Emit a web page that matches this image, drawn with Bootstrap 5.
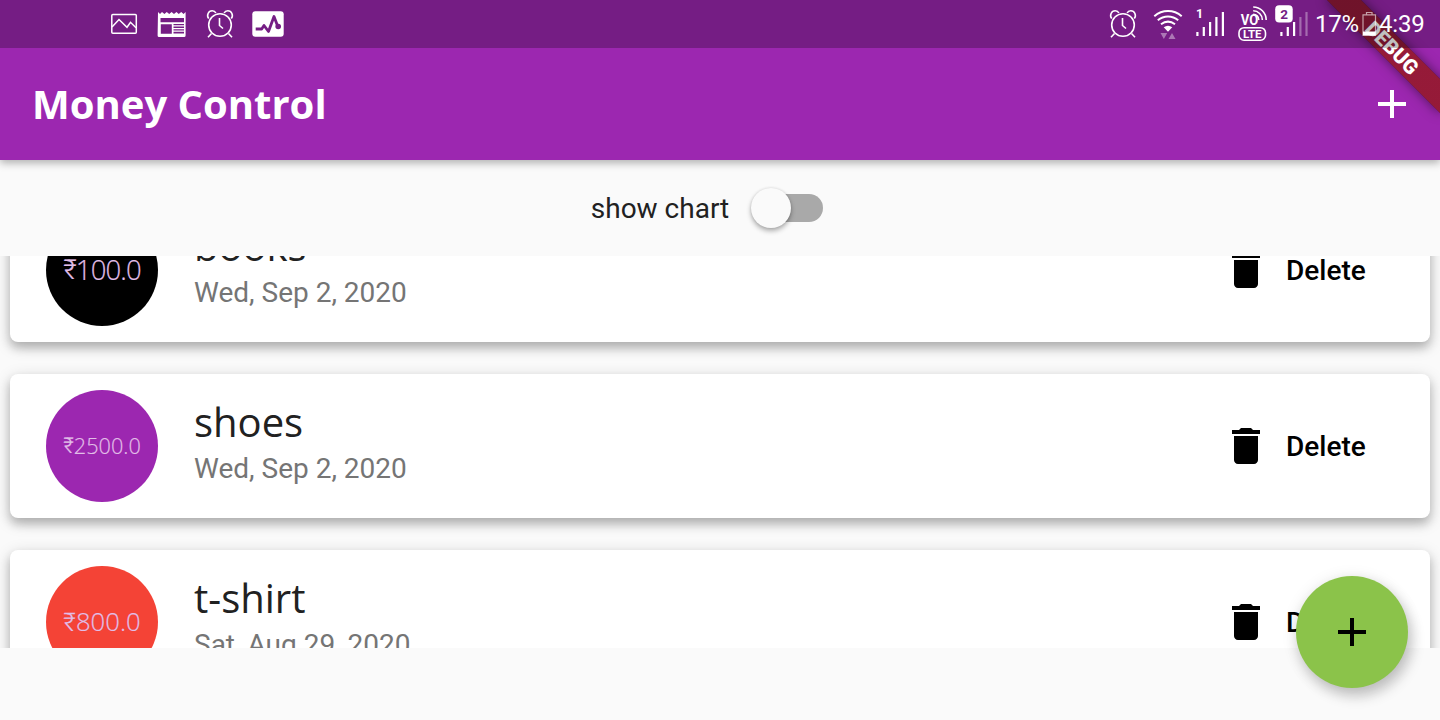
<!DOCTYPE html>
<html lang="en">
<head>
<meta charset="utf-8">
<meta name="viewport" content="width=device-width, initial-scale=1">
<title>Money Control</title>
<link href="https://cdn.jsdelivr.net/npm/bootstrap@5.3.0/dist/css/bootstrap.min.css" rel="stylesheet">
<style>
  :root { --purple: #9c27b0; --paper: #fafafa; }
  body { background: var(--paper); font-family: Roboto, sans-serif; color: #212121; }
  .screen { width: 1440px; height: 720px; }
  .status { height: 48px; background: rgba(0,0,0,.25); color: #fff; z-index: 6; font-size: 24px; line-height: 52px; padding-left: 108px; padding-right: 16px; }
  .top { height: 160px; background: var(--purple); box-shadow: 0 3px 8px rgba(0,0,0,.3); }
  .app-title { font: 700 40px/1 "Open Sans", sans-serif; color: #fff; }
  .app-row { height: 112px; padding: 0 24px 0 32px; }
  .pct { width: 47px; letter-spacing: -.3px; } .clock-time { width: 45px; letter-spacing: -.2px; }
  .ribbon { left: 1312px; top: 36px; width: 160px; height: 24px; transform: rotate(45deg); z-index: 5;
    background: linear-gradient(#b71c1ca0,#b71c1ca0), linear-gradient(#00000068,#00000068);
    box-shadow: 0 0 12px rgba(0,0,0,.5); color: #fff; font-weight: 900; font-size: 20.4px; line-height: 24px; }
  .toggle-row { height: 96px; font-size: 28px; padding-right: 26px; gap: 22px; }
  .toggle-row > span:first-child { padding-top: 2px; }
  .toggle-track { width: 68px; height: 28px; border-radius: 14px; background: #a9a9a9; margin-left: 4px; }
  .toggle-thumb { width: 40px; height: 40px; left: -4px; top: -6px; background: var(--paper); box-shadow: 0 3px 5px rgba(0,0,0,.3), 0 0 3px rgba(0,0,0,.12); }
  .tx-list { height: 392px; }
  .tx-stack { margin-top: -58px; gap: 32px; padding: 0 10px; }
  .tx { height: 144px; border: 0; border-radius: 8px; background: #fff; padding: 0 61px 0 36px; flex-shrink: 0;
    box-shadow: 0 6px 10px rgba(0,0,0,.19), 0 4px 16px rgba(0,0,0,.18); }
  .amount { width: 112px; height: 112px; font-family: "Open Sans", sans-serif; font-weight: 300; color: #e1bee7; white-space: nowrap; -webkit-text-stroke: .2px #e1bee7; }
  .amount-s { font-size: 21.7px; } .amount-m { font-size: 25.7px; } .amount-l { font-size: 27.5px; letter-spacing: -.9px; }
  .rupee { font-family: Roboto, sans-serif; }
  .tx-text { margin-left: 36px; padding-bottom: 10px; }
  .tx-name { font: 400 40px/56px "Open Sans", sans-serif; }
  .tx-date { font-size: 28px; line-height: 38px; color: #757575; }
  .del { font-size: 28px; font-weight: 500; color: #000; gap: 16px; width: 147px; }
  .del span { padding-top: 2px; }
  .fab { left: 1296px; top: 576px; width: 112px; height: 112px; background: #8bc34a; z-index: 7; box-shadow: 4px 8px 14px rgba(0,0,0,.2), 0 2px 16px rgba(0,0,0,.1); }
  .line { fill: none; stroke: #fff; }
</style>
</head>
<body>
<div class="screen position-relative overflow-hidden d-flex flex-column">
  <header class="top position-relative flex-shrink-0">
    <div class="status position-relative d-flex align-items-center">
      <!-- notifications -->
      <svg width="48" height="48" viewBox="108 0 48 48"><g class="line" stroke-width="1.5"><rect x="111.8" y="14.5" width="24.5" height="18.8" rx="1"/><path d="M112 27l7-7.5 8 7.8 3.5-5 5.5 5.5"/></g></svg>
      <svg width="48" height="48" viewBox="156 0 48 48"><path fill="#fff" fill-rule="evenodd" d="M158 12l2 2 2-2 2.400 2 2.400-2 2.400 2 2.400-2 2.400 2 2.400-2 2.400 2 2.400-2 2.400 2 2-2v23.500q0 1.500-1.500 1.500h-25q-1.500 0-1.500-1.500zM160.500 18v4.200h23.500v-4.200zM160.800 24.200v9.600h11v-9.600zM173.500 24h10.500v1.300h-10.500zM173.500 26.600h10.500v1.300h-10.500zM173.500 29.200h10.500v1.300h-10.500zM173.500 31.800h10.500v1.600h-10.500z"/></svg>
      <svg width="44" height="48" viewBox="204 0 44 48"><g class="line" stroke-width="1.6"><circle cx="220" cy="25" r="11.300"/><path d="M219.500 18v7.500l3.500 3M211.500 33.500l-3.500 3.700M228.500 33.500l3.500 3.700M208.700 18.500c-2.400-3-.4-7.700 3.500-7.700 1.800 0 3 .8 3.700 2.200M231.300 18.500c2.400-3 .4-7.700-3.500-7.700-1.800 0-3 .8-3.700 2.200"/></g></svg>
      <svg width="40" height="48" viewBox="248 0 40 48"><rect x="252.300" y="11.200" width="31.400" height="25.500" rx="3" fill="#fff"/><path d="M255.700 29h6l2.300-3.500 4.500 6 5.500-15 4 10.500" fill="none" stroke="#751d84" stroke-width="2.800" stroke-linejoin="round"/><circle cx="278.200" cy="26.500" r="2.800" fill="#751d84"/></svg>
      <!-- system tray -->
      <svg class="ms-auto" width="44" height="48" viewBox="1104 0 44 48"><g class="line" stroke-width="1.600"><circle cx="1123" cy="25" r="11.300"/><path d="M1122.500 18v7.500l3.500 3M1114.500 33.500l-3.500 3.700M1131.500 33.500l3.500 3.700M1111.700 18.500c-2.400-3-.4-7.700 3.500-7.700 1.800 0 3 .8 3.700 2.200M1134.300 18.500c2.400-3 .4-7.700-3.500-7.700-1.800 0-3 .8-3.700 2.200"/></g></svg>
      <svg width="44" height="48" viewBox="1148 0 44 48"><g class="line" stroke-width="2"><path d="M1154.300 16.200c8-6.900 19.400-6.900 27.400 0M1157.800 20.200c6-5 14.400-5 20.400 0M1161 24.300c4.300-3.300 9.700-3.300 14 0"/></g><path d="M1163.700 27.200q4.300-3 8.600 0l-4.300 4.500z" fill="#fff"/><path d="M1160.500 33h6.700l-3.350 6zM1168.500 39h7l-3.500-6z" fill="#fff" opacity=".4"/></svg>
      <svg width="42" height="48" viewBox="1192 0 42 48" fill="#fff"><path d="M1196.300 32h2.200v4h-2.200zM1202.700 27h2.200v9h-2.200zM1209 22h2.200v14h-2.200zM1215.300 17h2.200v19h-2.200zM1221.800 12h2.200v24h-2.200z"/><text x="1196" y="18" font-size="12.500" font-weight="700">1</text></svg>
      <svg width="38" height="48" viewBox="1234 0 38 48"><g class="line" stroke-width="1.600"><rect x="1239" y="27.700" width="26.500" height="12.500" rx="5"/><path d="M1253.200 7c7.200 0 13 5.800 13 13M1253.200 10.800c5 0 9.200 4.100 9.200 9.200M1253.200 14.300c3.100 0 5.600 2.500 5.600 5.600"/></g><g fill="#fff" font-weight="700"><text x="1240.700" y="24.800" font-size="14" textLength="17.500" lengthAdjust="spacingAndGlyphs">VO</text><text x="1243" y="38" font-size="11.300" textLength="18.500" lengthAdjust="spacingAndGlyphs">LTE</text></g></svg>
      <svg width="43" height="48" viewBox="1272 0 43 48" fill="#fff"><rect x="1275.200" y="5.200" width="17.500" height="17.300" rx="4"/><path d="M1280.300 32h2.200v4h-2.200zM1286.700 27h2.200v9h-2.200zM1293 22h2.200v14h-2.200z"/><path opacity=".35" d="M1299.300 17h2.200v19h-2.200zM1305.400 12h2.200v24h-2.200z"/><text x="1280.200" y="18.500" font-size="13.500" font-weight="700" fill="#751d84">2</text></svg>
      <span class="pct">17%</span>
      <svg width="17" height="48" viewBox="1362 0 17 48"><path class="line" stroke-width="1.200" opacity=".6" d="M1363 14.800h12.500v20.500h-12.500zM1366.500 14.500v-2h5.500v2"/><path fill="#fff" d="M1363 31.500h12.500v3.800h-12.500z"/></svg>
      <span class="clock-time">4:39</span>
    </div>
    <div class="app-row d-flex align-items-center justify-content-between">
      <h1 class="app-title mb-0">Money Control</h1>
      <svg width="48" height="48" viewBox="0 0 24 24" fill="#fff"><path d="M19 13h-6v6h-2v-6H5v-2h6V5h2v6h6v2z"/></svg>
    </div>
  </header>
  <div class="ribbon position-absolute text-center">DEBUG</div>

  <div class="toggle-row d-flex align-items-center justify-content-center flex-shrink-0">
    <span>show chart</span>
    <span class="toggle-track position-relative"><span class="toggle-thumb position-absolute rounded-circle"></span></span>
  </div>

  <main class="tx-list overflow-hidden flex-shrink-0">
    <div class="tx-stack d-flex flex-column">
      <article class="tx card flex-row align-items-center">
        <div class="amount amount-l rounded-circle d-flex align-items-center justify-content-center" style="background:#000"><span class="rupee">₹</span>100.0</div>
        <div class="tx-text"><div class="tx-name">books</div><div class="tx-date">Wed, Sep 2, 2020</div></div>
        <div class="del ms-auto d-flex align-items-center"><svg width="48" height="48" viewBox="0 0 24 24"><path d="M6 19c0 1.100.9 2 2 2h8c1.100 0 2-.9 2-2V7H6v12zM19 4h-3.500l-1-1h-5l-1 1H5v2h14V4z"/></svg><span>Delete</span></div>
      </article>
      <article class="tx card flex-row align-items-center">
        <div class="amount amount-s rounded-circle d-flex align-items-center justify-content-center" style="background:#9c27b0"><span class="rupee">₹</span>2500.0</div>
        <div class="tx-text"><div class="tx-name">shoes</div><div class="tx-date">Wed, Sep 2, 2020</div></div>
        <div class="del ms-auto d-flex align-items-center"><svg width="48" height="48" viewBox="0 0 24 24"><path d="M6 19c0 1.100.9 2 2 2h8c1.100 0 2-.9 2-2V7H6v12zM19 4h-3.500l-1-1h-5l-1 1H5v2h14V4z"/></svg><span>Delete</span></div>
      </article>
      <article class="tx card flex-row align-items-center">
        <div class="amount amount-m rounded-circle d-flex align-items-center justify-content-center" style="background:#f44336"><span class="rupee">₹</span>800.0</div>
        <div class="tx-text"><div class="tx-name">t-shirt</div><div class="tx-date">Sat, Aug 29, 2020</div></div>
        <div class="del ms-auto d-flex align-items-center"><svg width="48" height="48" viewBox="0 0 24 24"><path d="M6 19c0 1.100.9 2 2 2h8c1.100 0 2-.9 2-2V7H6v12zM19 4h-3.500l-1-1h-5l-1 1H5v2h14V4z"/></svg><span>Delete</span></div>
      </article>
    </div>
  </main>
  <button class="fab position-absolute rounded-circle border-0 p-0 d-flex align-items-center justify-content-center" aria-label="Add"><svg width="48" height="48" viewBox="0 0 24 24"><path d="M19 13h-6v6h-2v-6H5v-2h6V5h2v6h6v2z"/></svg></button>
</div>
<script src="https://cdn.jsdelivr.net/npm/bootstrap@5.3.0/dist/js/bootstrap.bundle.min.js"></script>
</body>
</html>
